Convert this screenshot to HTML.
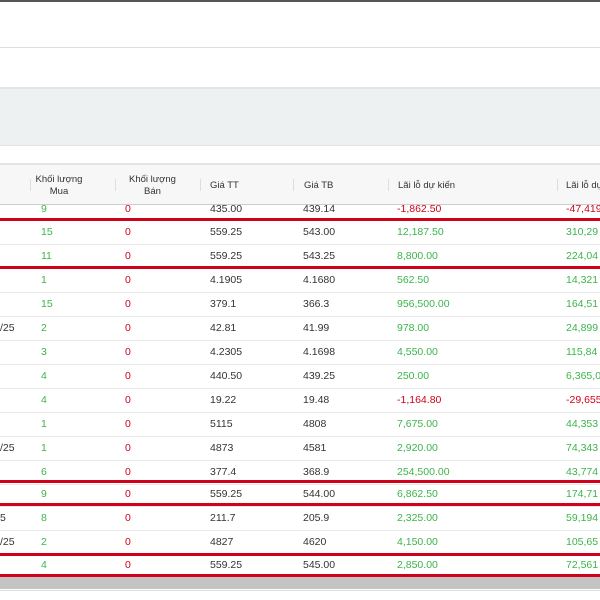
<!DOCTYPE html>
<html><head><meta charset="utf-8"><style>
body{margin:0;width:600px;height:600px;overflow:hidden;background:#fff;font-family:"Liberation Sans",sans-serif;font-size:10.5px;color:#333;position:relative}
.a{position:absolute}
.r{position:absolute;left:0;width:600px;height:24px;line-height:24px;border-bottom:1px solid #e8e8e8}
.r span{position:absolute}
.g{color:#3cb44b}.d{color:#d0021b}
.red{position:absolute;left:0;width:600px;height:3px;background:#d0021b}
.h span{position:absolute;font-size:9.5px;color:#333;text-align:center;line-height:12px}
.sep{position:absolute;width:1px;height:12px;background:#ddd;top:179px}
</style></head><body>
<div class="a" style="top:0;left:0;width:600px;height:2px;background:#555"></div>
<div class="a" style="top:47px;left:0;width:600px;height:1px;background:#ddd"></div>
<div class="a" style="top:87px;left:0;width:600px;height:59px;background:#eef1f2;border-top:2px solid #e2e5e6;border-bottom:1px solid #e2e5e6;box-sizing:border-box"></div>
<div class="a h" style="top:163px;left:0;width:600px;height:42px;background:#f7f7f7;border-top:2px solid #e4e4e4;border-bottom:1px solid #ccc;box-sizing:border-box">
<span style="left:34px;top:9px;width:50px">Khối lượng<br>Mua</span>
<span style="left:115px;top:9px;width:75px">Khối lượng<br>Bán</span>
<span style="left:210px;top:15px">Giá TT</span>
<span style="left:304px;top:15px">Giá TB</span>
<span style="left:398px;top:15px">Lãi lỗ dự kiến</span>
<span style="left:566px;top:15px;white-space:nowrap">Lãi lỗ dự</span>
</div>
<div class="sep" style="left:30px"></div><div class="sep" style="left:115px"></div><div class="sep" style="left:200px"></div><div class="sep" style="left:293px"></div><div class="sep" style="left:388px"></div><div class="sep" style="left:557px"></div>
<div class="a" style="top:205px;left:0;width:600px;height:13px;overflow:hidden">
<div class="r" style="top:-8px"><span class="g" style="left:41px">9</span><span class="d" style="left:125px">0</span><span style="left:210px">435.00</span><span style="left:303px">439.14</span><span class="d" style="left:397px">-1,862.50</span><span class="d" style="left:566px">-47,419</span></div></div>
<div class="r" style="top:220px"><span class="g" style="left:41px">15</span><span class="d" style="left:125px">0</span><span style="left:210px">559.25</span><span style="left:303px">543.00</span><span class="g" style="left:397px">12,187.50</span><span class="g" style="left:566px">310,29</span></div>
<div class="r" style="top:244px"><span class="g" style="left:41px">11</span><span class="d" style="left:125px">0</span><span style="left:210px">559.25</span><span style="left:303px">543.25</span><span class="g" style="left:397px">8,800.00</span><span class="g" style="left:566px">224,04</span></div>
<div class="r" style="top:268px"><span class="g" style="left:41px">1</span><span class="d" style="left:125px">0</span><span style="left:210px">4.1905</span><span style="left:303px">4.1680</span><span class="g" style="left:397px">562.50</span><span class="g" style="left:566px">14,321</span></div>
<div class="r" style="top:292px"><span class="g" style="left:41px">15</span><span class="d" style="left:125px">0</span><span style="left:210px">379.1</span><span style="left:303px">366.3</span><span class="g" style="left:397px">956,500.00</span><span class="g" style="left:566px">164,51</span></div>
<div class="r" style="top:316px"><span style="left:0">/25</span><span class="g" style="left:41px">2</span><span class="d" style="left:125px">0</span><span style="left:210px">42.81</span><span style="left:303px">41.99</span><span class="g" style="left:397px">978.00</span><span class="g" style="left:566px">24,899</span></div>
<div class="r" style="top:340px"><span class="g" style="left:41px">3</span><span class="d" style="left:125px">0</span><span style="left:210px">4.2305</span><span style="left:303px">4.1698</span><span class="g" style="left:397px">4,550.00</span><span class="g" style="left:566px">115,84</span></div>
<div class="r" style="top:364px"><span class="g" style="left:41px">4</span><span class="d" style="left:125px">0</span><span style="left:210px">440.50</span><span style="left:303px">439.25</span><span class="g" style="left:397px">250.00</span><span class="g" style="left:566px">6,365,0</span></div>
<div class="r" style="top:388px"><span class="g" style="left:41px">4</span><span class="d" style="left:125px">0</span><span style="left:210px">19.22</span><span style="left:303px">19.48</span><span class="d" style="left:397px">-1,164.80</span><span class="d" style="left:566px">-29,655</span></div>
<div class="r" style="top:412px"><span class="g" style="left:41px">1</span><span class="d" style="left:125px">0</span><span style="left:210px">5115</span><span style="left:303px">4808</span><span class="g" style="left:397px">7,675.00</span><span class="g" style="left:566px">44,353</span></div>
<div class="r" style="top:436px"><span style="left:0">/25</span><span class="g" style="left:41px">1</span><span class="d" style="left:125px">0</span><span style="left:210px">4873</span><span style="left:303px">4581</span><span class="g" style="left:397px">2,920.00</span><span class="g" style="left:566px">74,343</span></div>
<div class="r" style="top:460px"><span class="g" style="left:41px">6</span><span class="d" style="left:125px">0</span><span style="left:210px">377.4</span><span style="left:303px">368.9</span><span class="g" style="left:397px">254,500.00</span><span class="g" style="left:566px">43,774</span></div>
<div class="r" style="top:482px"><span class="g" style="left:41px">9</span><span class="d" style="left:125px">0</span><span style="left:210px">559.25</span><span style="left:303px">544.00</span><span class="g" style="left:397px">6,862.50</span><span class="g" style="left:566px">174,71</span></div>
<div class="r" style="top:506px"><span style="left:0">5</span><span class="g" style="left:41px">8</span><span class="d" style="left:125px">0</span><span style="left:210px">211.7</span><span style="left:303px">205.9</span><span class="g" style="left:397px">2,325.00</span><span class="g" style="left:566px">59,194</span></div>
<div class="r" style="top:530px"><span style="left:0">/25</span><span class="g" style="left:41px">2</span><span class="d" style="left:125px">0</span><span style="left:210px">4827</span><span style="left:303px">4620</span><span class="g" style="left:397px">4,150.00</span><span class="g" style="left:566px">105,65</span></div>
<div class="r" style="top:554px;height:21px;line-height:22px"><span class="g" style="left:41px">4</span><span class="d" style="left:125px">0</span><span style="left:210px">559.25</span><span style="left:303px">545.00</span><span class="g" style="left:397px">2,850.00</span><span class="g" style="left:566px">72,561</span></div>
<div class="red" style="top:218px"></div>
<div class="red" style="top:266px"></div>
<div class="red" style="top:480px"></div>
<div class="red" style="top:503px"></div>
<div class="red" style="top:553px"></div>
<div class="red" style="top:574px"></div>
<div class="a" style="top:577px;left:0;width:600px;height:12px;background:#c4c4c4"></div>
<div class="a" style="top:590px;left:0;width:600px;height:1px;background:#ddd"></div>
</body></html>
